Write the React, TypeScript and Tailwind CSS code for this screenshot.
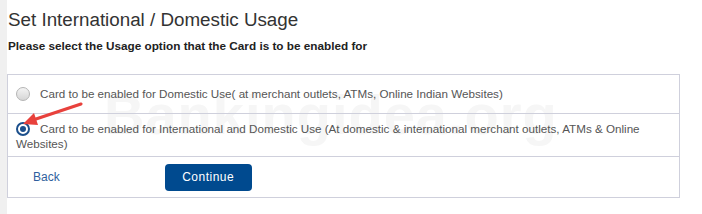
import React from 'react';

const font = { fontFamily: '"Liberation Sans", Arial, sans-serif' };

function Radio({ checked }: { checked?: boolean }) {
  if (checked) {
    return (
      <span className="inline-block align-[-3px] w-[14px] h-[14px] rounded-full border-2 border-[#1b4f8c] bg-white mr-[10px] relative">
        <span className="absolute left-[2px] top-[2px] w-[6px] h-[6px] rounded-full bg-[#1b4f8c]" />
      </span>
    );
  }
  return (
    <span className="inline-block align-[-3px] w-[14px] h-[14px] rounded-full border border-[#b5b5b5] bg-gradient-to-b from-[#f4f4f4] to-[#d6d6d6] mr-[10px]" />
  );
}

export default function App() {
  return (
    <div className="flex w-[702px] h-[214px] bg-white" style={font}>
      <div className="w-[7px] bg-[#f0f0f0]" />
      <div className="flex-1 pr-[22px]">
        <h1 className="pt-[8px] pl-px text-[18.8px] leading-[24px] text-[#333]">Set International / Domestic Usage</h1>
        <p className="mt-[7px] pl-px text-[11.75px] leading-[14px] font-bold text-[#222]">
          Please select the Usage option that the Card is to be enabled for
        </p>

        <div className="relative mt-[21px] border border-[#cfd0dc] text-[11.65px] text-[#555]">
          <div className="pointer-events-none absolute left-[96px] top-[12px] text-[56px] leading-none font-bold text-[#f6f6f6] tracking-[1px] select-none">
            Bankingidea.org
          </div>

          <div className="relative flex items-center h-[38px] pl-[8px]">
            <Radio />
            <span>Card to be enabled for Domestic Use( at merchant outlets, ATMs, Online Indian Websites)</span>
          </div>

          <div className="relative border-t border-[#cfd0dc] pt-[7px] pb-[5px] pl-[8px] pr-[8px] leading-[15px]">
            <Radio checked />
            Card to be enabled for International and Domestic Use (At domestic &amp; international merchant outlets, ATMs &amp; Online Websites)
          </div>

          <div className="relative flex items-center h-[41px] border-t border-[#cfd0dc]">
            <a className="ml-[25px] text-[12px] text-[#2f5f9e] cursor-pointer">Back</a>
            <button className="ml-[105px] w-[87px] h-[27px] rounded-[4px] bg-[#004a8f] text-white text-[12px] tracking-[0.5px]">
              Continue
            </button>
          </div>

          <svg className="pointer-events-none absolute left-[9px] top-[26px]" width="70" height="26" viewBox="0 0 70 26">
            <line x1="64" y1="3" x2="16" y2="19" stroke="#e8413c" strokeWidth="3" strokeLinecap="round" />
            <polygon points="6,23 17,12 21,24" fill="#e8413c" />
          </svg>
        </div>
      </div>
    </div>
  );
}
